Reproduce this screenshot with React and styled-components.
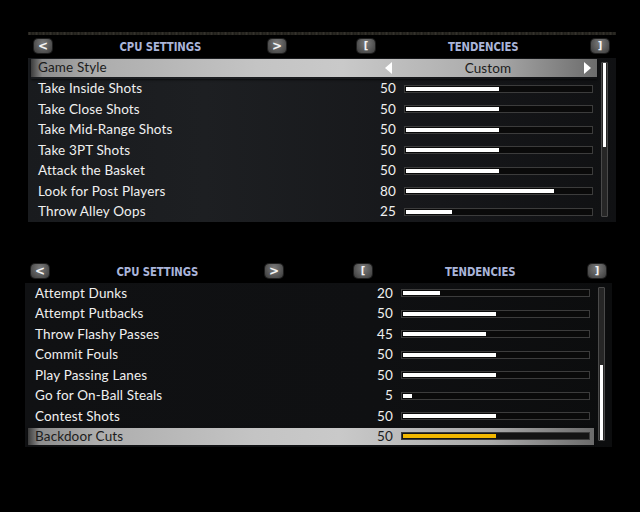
import React from "react";
import styled, { createGlobalStyle, css } from "styled-components";

const offense = [
    { label: "Take Inside Shots", value: 50 },
    { label: "Take Close Shots", value: 50 },
    { label: "Take Mid-Range Shots", value: 50 },
    { label: "Take 3PT Shots", value: 50 },
    { label: "Attack the Basket", value: 50 },
    { label: "Look for Post Players", value: 80 },
    { label: "Throw Alley Oops", value: 25 },
];

const defense = [
    { label: "Attempt Dunks", value: 20 },
    { label: "Attempt Putbacks", value: 50 },
    { label: "Throw Flashy Passes", value: 45 },
    { label: "Commit Fouls", value: 50 },
    { label: "Play Passing Lanes", value: 50 },
    { label: "Go for On-Ball Steals", value: 5 },
    { label: "Contest Shots", value: 50 },
    { label: "Backdoor Cuts", value: 50, active: true },
];

const Header = () => (
    <Head>
        <Group>
            <Key>&lt;</Key>
            <Title>CPU SETTINGS</Title>
            <Key>&gt;</Key>
        </Group>
        <Group $gap>
            <Key $bracket>[</Key>
            <Title>TENDENCIES</Title>
            <Key $bracket>]</Key>
        </Group>
    </Head>
);

const SliderRow = ({ label, value, active }) => (
    <Row $active={active}>
        <Label>{label}</Label>
        <Num>{value}</Num>
        <Bar $active={active}>
            <Fill $active={active} $value={value} />
        </Bar>
    </Row>
);

const Arrow = ({ dir }) => (
    <svg width="7" height="12" viewBox="0 0 7 12">
        {dir === "left" ? (
            <polygon points="7,0 7,12 0,6" fill="#fff" />
        ) : (
            <polygon points="0,0 0,12 7,6" fill="#fff" />
        )}
    </svg>
);

const App = () => {
    return (
        <Screen>
            <GlobalStyle />
            <Panel>
                <Texture />
                <Header />
                <Body>
                    <List>
                        <Row $active>
                            <Label>Game Style</Label>
                            <Selector>
                                <Arrow dir="left" />
                                <span>Custom</span>
                                <Arrow dir="right" />
                            </Selector>
                        </Row>
                        {offense.map((r) => (
                            <SliderRow key={r.label} {...r} />
                        ))}
                    </List>
                    <Scroll $height={155}>
                        <Thumb $top={0} $height={84} />
                    </Scroll>
                </Body>
            </Panel>
            <Panel $second>
                <Header />
                <Body>
                    <List>
                        {defense.map((r) => (
                            <SliderRow key={r.label} {...r} />
                        ))}
                    </List>
                    <Scroll $height={154}>
                        <Thumb $top={77} $height={75} />
                    </Scroll>
                </Body>
            </Panel>
        </Screen>
    );
};

export default App;

const GlobalStyle = createGlobalStyle`
    body {
        margin: 0;
        background: #000;
    }
`;

const Screen = styled.div`
    width: 640px;
    height: 512px;
    overflow: hidden;
    background: #000;
    box-sizing: border-box;
    padding: 32px 0 0 28px;
    font-family: "Lato", "Open Sans", sans-serif;
`;

const Panel = styled.div`
    position: relative;
    width: 588px;
    background: linear-gradient(to bottom, #000 0, #000 26px, transparent 26px),
        linear-gradient(to right, #191b1e 0%, #1d1f22 30%, #16171a 70%, #101113 100%);
    ${(p) =>
        p.$second &&
        css`
            margin: 35px 0 0 -3px;
            width: 587px;
            background: linear-gradient(to bottom, #000 0, #000 26px, transparent 26px),
                linear-gradient(to right, #101113 0%, #0f1012 60%, #0c0d0e 100%);
        `}
`;

const Texture = styled.div`
    position: absolute;
    top: 0;
    left: 0;
    right: 0;
    height: 3px;
    background: repeating-linear-gradient(
            to right,
            #2b2924 0px,
            #4a463d 2px,
            #1e1d1a 3px,
            #3a372f 5px,
            #25231f 7px
        ),
        #2e2b26;
    opacity: 0.8;
`;

const Head = styled.div`
    height: 26px;
    display: flex;
    align-items: center;
    padding-left: 6px;
    padding-top: 1px;
    box-sizing: border-box;
`;

const Group = styled.div`
    width: 252px;
    display: flex;
    align-items: center;
    justify-content: space-between;
    margin-left: ${(p) => (p.$gap ? "71px" : "0")};
`;

const Key = styled.div`
    width: 18px;
    height: 14px;
    border-radius: 4px;
    background: radial-gradient(ellipse at 50% 30%, #7c7c7c 0%, #5c5c5c 50%, #3a3a3a 100%);
    box-shadow: 0 0 0 1px #1e1e1e;
    color: #f4f4f4;
    font-family: "DejaVu Sans", sans-serif;
    font-weight: bold;
    font-size: ${(p) => (p.$bracket ? "10px" : "12px")};
    line-height: 14px;
    text-align: center;
`;

const Title = styled.div`
    color: #aab5da;
    font-family: "DejaVu Sans Condensed", "DejaVu Sans", sans-serif;
    font-weight: bold;
    font-size: 12.5px;
    letter-spacing: -0.1px;
    transform: scaleX(0.9);
    padding-top: 1px;
`;

const Body = styled.div`
    display: flex;
    align-items: flex-start;
`;

const List = styled.div`
    margin-left: 3px;
    width: 566px;
`;

const Row = styled.div`
    height: 20.5px;
    box-sizing: border-box;
    display: flex;
    align-items: center;
    padding: 0 4px 0 7px;
    color: #f0f0f0;
    font-size: 13.5px;
    letter-spacing: 0.15px;
    ${(p) =>
        p.$active &&
        css`
            color: #1c1c1c;
            border-top: 1px solid transparent;
            border-bottom: 2px solid transparent;
            background-clip: padding-box;
            background-image: linear-gradient(
                to right,
                #3c3c3c 0%,
                #8d8d8d 2%,
                #adadad 12%,
                #c4c4c4 40%,
                #c9c9c9 55%,
                #a9a9a9 82%,
                #6c6c6c 100%
            );
            box-shadow: 0 1px 2px rgba(0, 0, 0, 0.6);
        `}
`;

const Label = styled.div`
    flex: 1;
    white-space: nowrap;
    padding-bottom: 1px;
`;

const Num = styled.div`
    width: 30px;
    text-align: right;
    margin-right: 8px;
    padding-bottom: 1px;
`;

const Bar = styled.div`
    width: 189px;
    height: 8px;
    box-sizing: border-box;
    border: 1px solid #3c3c3c;
    background: ${(p) => (p.$active ? "#141414" : "#0a0a0a")};
    padding: 1px;
`;

const Fill = styled.div`
    height: 100%;
    width: ${(p) => p.$value}%;
    background: ${(p) => (p.$active ? "#f2b800" : "#fff")};
`;

const Selector = styled.div`
    width: 206px;
    margin-right: 2px;
    display: flex;
    align-items: center;
    justify-content: space-between;
    color: #1c1c1c;
    span {
        padding-top: 1px;
    }
`;

const Scroll = styled.div`
    margin: 4px 0 0 4px;
    width: 7px;
    height: ${(p) => p.$height}px;
    box-sizing: border-box;
    border: 1px solid #4a4a4a;
    border-radius: 1px;
    background: #262626;
    position: relative;
`;

const Thumb = styled.div`
    position: absolute;
    left: 1px;
    right: 1px;
    top: ${(p) => p.$top}px;
    height: ${(p) => p.$height}px;
    background: #fff;
`;
